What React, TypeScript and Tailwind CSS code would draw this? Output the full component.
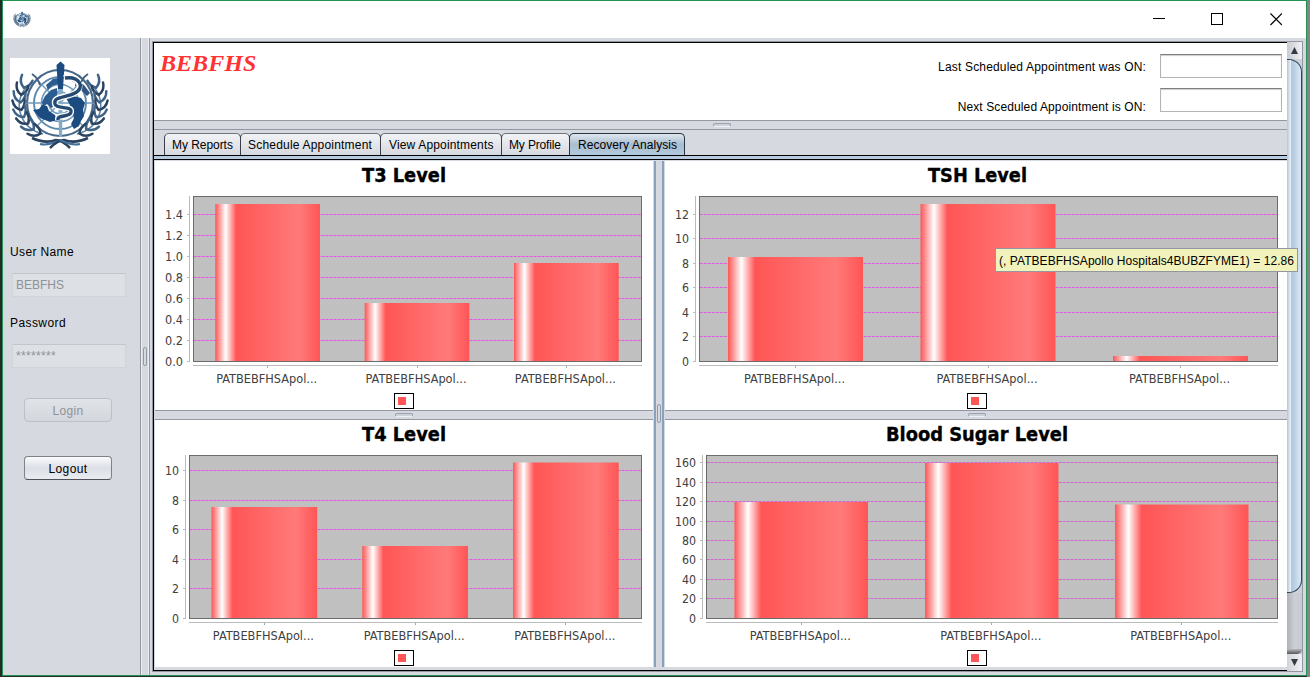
import React from "react";

type Bar = { x: number; w: number; y: number };
type Tick = { label: string; y: number };
type ChartSpec = {
  id: string;
  title: string;
  titleX: number;
  titleW: number;
  titleY: number;
  view: [number, number, number, number];
  plot: { x: number; y: number; r: number; b: number };
  bars: Bar[];
  ticks: Tick[];
  legendX: number;
};

function makeTicks(labels: string[], zero: number, step: number): Tick[] {
  return labels.map((label, i) => ({ label, y: Math.round(zero - i * step) }));
}

const T3: ChartSpec = {
  id: "t3",
  title: "T3 Level",
  titleX: 362,
  titleW: 84,
  titleY: 182,
  view: [155, 161, 498, 249],
  plot: { x: 193, y: 196, r: 642, b: 361 },
  bars: [
    { x: 215.3, w: 104.7, y: 204 },
    { x: 364.7, w: 104.7, y: 303 },
    { x: 514, w: 104.7, y: 263 },
  ],
  ticks: makeTicks(["0.0", "0.2", "0.4", "0.6", "0.8", "1.0", "1.2", "1.4"], 361, 21),
  legendX: 394,
};

const T4: ChartSpec = {
  id: "t4",
  title: "T4 Level",
  titleX: 362,
  titleW: 84,
  titleY: 441,
  view: [155, 420, 498, 247],
  plot: { x: 189, y: 455, r: 642, b: 618 },
  bars: [
    { x: 211.5, w: 105.7, y: 507 },
    { x: 362.3, w: 105.7, y: 546 },
    { x: 513, w: 105.7, y: 462.5 },
  ],
  ticks: makeTicks(["0", "2", "4", "6", "8", "10"], 617.8, 29.55),
  legendX: 394,
};

const TSH: ChartSpec = {
  id: "tsh",
  title: "TSH Level",
  titleX: 928,
  titleW: 99,
  titleY: 182,
  view: [665, 161, 622, 249],
  plot: { x: 699, y: 196, r: 1278, b: 361 },
  bars: [
    { x: 728, w: 135, y: 257 },
    { x: 920.5, w: 135, y: 204 },
    { x: 1113, w: 135, y: 356 },
  ],
  ticks: makeTicks(["0", "2", "4", "6", "8", "10", "12"], 360.8, 24.47),
  legendX: 967,
};

const SUGAR: ChartSpec = {
  id: "sugar",
  title: "Blood Sugar Level",
  titleX: 886,
  titleW: 182,
  titleY: 441,
  view: [665, 420, 622, 247],
  plot: { x: 706, y: 455, r: 1278, b: 618 },
  bars: [
    { x: 734.5, w: 133.5, y: 502 },
    { x: 925, w: 133.5, y: 463 },
    { x: 1115, w: 133.5, y: 504.5 },
  ],
  ticks: makeTicks(["0", "20", "40", "60", "80", "100", "120", "140", "160"], 617.8, 19.45),
  legendX: 967,
};

function Chart({ spec }: { spec: ChartSpec }) {
  const { plot, view } = spec;
  const legendY = plot.b + 32;
  return (
    <svg
      width={view[2]}
      height={view[3]}
      viewBox={view.join(" ")}
      className="block shrink-0 bg-white font-['DejaVu_Sans_Condensed','DejaVu_Sans',sans-serif]"
    >
      <defs>
        <linearGradient id={"bar-" + spec.id} x1="0" x2="1" y1="0" y2="0">
          <stop offset="0" stopColor="#ff5555" />
          <stop offset="0.1" stopColor="#ffffff" />
          <stop offset="0.2" stopColor="#ff5555" />
          <stop offset="0.8" stopColor="#ff7a7a" />
          <stop offset="1" stopColor="#ff5555" />
        </linearGradient>
      </defs>
      <text
        x={spec.titleX}
        y={spec.titleY}
        textLength={spec.titleW}
        lengthAdjust="spacingAndGlyphs"
        fontSize="19.5"
        fontWeight="700"
        fontStretch="condensed"
        stroke="#000"
        strokeWidth="0.35"
      >
        {spec.title}
      </text>
      <rect x={plot.x + 0.5} y={plot.y + 0.5} width={plot.r - plot.x - 1} height={plot.b - plot.y} fill="#c0c0c0" />
      {spec.ticks.slice(1).map((t) => (
        <g key={t.label}>
          <path d={`M${plot.x + 1} ${t.y + 0.5}H${plot.r - 1}`} stroke="#c3a6c3" />
          <path d={`M${plot.x + 1} ${t.y + 0.5}H${plot.r - 1}`} stroke="#e15ade" strokeDasharray="2.6 1.4" />
        </g>
      ))}
      {spec.bars.map((b) => (
        <rect key={b.x} x={b.x} y={b.y} width={b.w} height={plot.b - b.y} fill={`url(#bar-${spec.id})`} />
      ))}
      <rect
        x={plot.x + 0.5}
        y={plot.y + 0.5}
        width={plot.r - plot.x - 1}
        height={plot.b - plot.y}
        fill="none"
        stroke="#6c6c6c"
      />
      <path d={`M${plot.x - 3.5} ${plot.y}V${plot.b + 1}`} stroke="#bcbcbc" />
      <path d={`M${plot.x} ${plot.b + 4.5}H${plot.r}`} stroke="#bcbcbc" />
      {spec.ticks.map((t) => (
        <g key={t.label}>
          <path d={`M${plot.x - 6} ${t.y + 0.5}h2`} stroke="#bcbcbc" />
          <text
            x={plot.x - 10 - t.label.replace(".", "").length * 7 - (t.label.includes(".") ? 4 : 0)}
            y={t.y + 5}
            textLength={t.label.replace(".", "").length * 7 + (t.label.includes(".") ? 4 : 0)}
            lengthAdjust="spacingAndGlyphs"
            fontSize="12"
            fontStretch="condensed"
            fill="#404040"
          >
            {t.label}
          </text>
        </g>
      ))}
      {spec.bars.map((b) => {
        const cx = b.x + b.w / 2;
        return (
          <g key={b.x}>
            <path d={`M${Math.floor(cx) + 0.5} ${plot.b + 5}v2`} stroke="#a8a8a8" />
            <text
              x={cx - 51.5}
              y={plot.b + 22}
              textLength="101"
              lengthAdjust="spacingAndGlyphs"
              fontSize="12"
              fontStretch="condensed"
              fill="#404040"
            >
              PATBEBFHSApol...
            </text>
          </g>
        );
      })}
      <rect x={spec.legendX + 0.5} y={legendY + 0.5} width="19" height="15" fill="#fff" stroke="#000" />
      <rect x={spec.legendX + 4} y={legendY + 4} width="8" height="8" fill="#ff5555" />
    </svg>
  );
}

const LEAVES = [205, 193, 181, 169, 157, 145, 133, 121];

function Emblem({ size, height, detail }: { size: number; height: number; detail: boolean }) {
  const navy = "#1b4b80";
  const dark = "#2a435e";
  return (
    <svg width={size} height={height} viewBox="0 0 100 96" className="block" preserveAspectRatio="none">
      {detail && <rect width="100" height="96" fill="#fff" />}
      <g fill="none" stroke="#6f98ba" strokeWidth={detail ? 1.6 : 2.6}>
        <circle cx="50" cy="45" r="33" stroke="#46688a" strokeWidth={detail ? 2.2 : 3.5} />
        <circle cx="50" cy="45" r="26" stroke="#5d88ad" strokeWidth="1.9" />
        <circle cx="50" cy="45" r="18.5" />
        <circle cx="50" cy="45" r="11" />
        <path d="M16 45H84M27 22L73 68M73 22L27 68" strokeWidth="1.4" />
      </g>
      <g fill={navy}>
        <path d="M36 27l7-6 5-1v6l-6 2-4 4zM35 38l6-6 6-2 1 13-3 5-4 2-4-4-4 3-1-5z" fill="#2b5d90" />
        <path d="M66 22l8 5 6 8-3 3-6-6-6-4z" fill="#2f5680" />
        <path d="M23 52l6-1 3-4 5 1 2 5 6 4 2 5-7 2-5-2-5-2z" />
        <path d="M56 40l7-2 8 2 4 5-2 7 1 6-3 5-2 5-5 3-3-5 3-6-1-5-5-4 2-4z" />
      </g>
      {[false, true].map((right) => (
        <g key={String(right)} transform={right ? "translate(100 0) scale(-1 1)" : undefined} stroke={dark} fill="none">
          <path d="M17 28C2 46 10 70 33 76" stroke="#5f84a6" strokeWidth="1.6" />
          {LEAVES.map((deg, i) => {
            const a = (deg * Math.PI) / 180;
            const x = 50 + 39.5 * Math.cos(a);
            const y = 44 + 36 * Math.sin(a);
            return (
              <g key={deg} transform={`translate(${x.toFixed(1)} ${y.toFixed(1)}) rotate(${deg - 180})`}>
                <path
                  d="M0 1Q-7-2-7-10M0 1Q5-3 5-9"
                  stroke={i % 2 ? dark : "#3f6386"}
                  strokeWidth={detail ? 2.5 : 3.2}
                  strokeLinecap="round"
                />
              </g>
            );
          })}
          <path d="M22 16Q28 20 30 27" strokeWidth="2" stroke="#45617d" />
          <path d="M22 80Q35 86 46 82Q52 82 60 90" strokeWidth="2.6" />
          <path d="M30 86Q38 88 50 82" strokeWidth="2" stroke="#44709a" />
        </g>
      ))}
      <path d="M48 30h5l-1 49h-3z" fill="#86abc8" />
      <path d="M46.5 7L50.5 3.5 54.500 7 53 31h-5z" fill={navy} />
      <path
        d="M54 20C67 17 75 29 65 35C56 40 43 38 45 46C47 52 62 47 61 54C60 60 47 56 48 62"
        fill="none"
        stroke="#fff"
        strokeWidth={detail ? 6 : 3}
      />
      <path
        d="M55 20C69 18 76 29 65 35C56 40 43 38 45 46C47 52 62 47 61 54C60 60 47 56 48 62"
        fill="none"
        stroke="#264b72"
        strokeWidth={detail ? 3.4 : 5}
      />
    </svg>
  );
}

function HHandle() {
  return <div className="h-[4px] w-[18px] rounded-[2px] border border-[#9aa0ac] border-b-[#eef0f4] bg-[#cdd1d9]" />;
}

function VHandle() {
  return <div className="h-[19px] w-[4px] rounded-[2px] border border-[#9298a6] bg-[#d6d9df]" />;
}

function HSplit({ pad }: { pad: string }) {
  return (
    <div className={"flex h-[10px] shrink-0 items-start border-y border-[#9297a1] bg-[#d6d9df] pt-[2px] " + pad}>
      <HHandle />
    </div>
  );
}

function Tab({ label, cls, active = false }: { label: string; cls: string; active?: boolean }) {
  return (
    <div
      className={
        "-mr-px flex h-[22px] shrink-0 items-center whitespace-nowrap rounded-t-[5px] border border-b-0 pt-[1px] " +
        (active
          ? "border-[#273442] bg-gradient-to-b from-[#dfe7ee] via-[#a9bed1] to-[#b3c9dc] "
          : "border-[#3b3f47] border-t-[#70747c] bg-gradient-to-b from-[#f2f3f6] to-[#d6d9df] ") +
        cls
      }
    >
      {label}
    </div>
  );
}

function ScrollBar() {
  return (
    <div className="flex w-[16px] shrink-0 flex-col border-r border-[#9297a1] bg-[#cfd2d8]">
      <div className="flex h-[17px] items-center justify-center bg-gradient-to-r from-[#c8cbd1] to-[#f0f1f4]">
        <svg width="7" height="7" viewBox="0 0 7 7">
          <path d="M3.5 0L7 7H0z" fill="#333a42" />
        </svg>
      </div>
      <div className="h-[535px] rounded-r-[13px] border-y border-r border-[#2c4659] bg-gradient-to-r from-[#a9bdd0] via-[#b7cfe3] to-[#dceaf7]">
        <div className="h-full w-[4px] bg-gradient-to-r from-[#b8c3d4] to-[#eff5fa]" />
      </div>
      <div className="flex h-[61px] flex-col justify-end bg-gradient-to-r from-[#aeb1b8] via-[#cccfd4] to-[#c7cad0]">
        <div className="h-[5px] rounded-br-[10px] bg-gradient-to-b from-[#b8bac0] to-[#55575c]" />
      </div>
      <div className="flex h-[17px] items-center justify-center bg-gradient-to-r from-[#d1d4d9] to-[#f0f1f4]">
        <svg width="7" height="7" viewBox="0 0 7 7">
          <path d="M0 0H7L3.5 7z" fill="#333a42" />
        </svg>
      </div>
    </div>
  );
}

function TitleBar() {
  return (
    <div className="flex h-[37px] shrink-0 items-center justify-between bg-white pl-[10px] pr-[24px]">
      <Emblem size={18} height={17} detail={false} />
      <svg width="129" height="13" viewBox="0 0 129 13" fill="none" stroke="#000" className="block">
        <path d="M0 5.5H12" />
        <rect x="58.5" y=".5" width="11" height="11" />
        <path d="M117.500.5L129 12M129 .5L117.500 12" strokeWidth="1.2" />
      </svg>
    </div>
  );
}

function Sidebar() {
  return (
    <div className="flex w-[137px] shrink-0 flex-col pl-[7px] pt-[20px]">
      <Emblem size={100} height={96} detail />
      <div className="mt-[91px] h-[14px] leading-[14px] tracking-[0.36px]">User Name</div>
      <div className="ml-[2px] mt-[14px] flex h-[24px] w-[114px] items-center border border-[#d0d3d8] border-t-[#c3c6ca] bg-[#dde0e4] pl-[3px] text-[#8e9297]">
        BEBFHS
      </div>
      <div className="mt-[19px] h-[14px] leading-[14px] tracking-[0.42px]">Password</div>
      <div className="ml-[2px] mt-[14px] flex h-[24px] w-[114px] items-center border border-[#d0d3d8] border-t-[#c3c6ca] bg-[#dde0e4] pl-[3px] tracking-[0.33px] text-[#8e9297]">
        ********
      </div>
      <div className="ml-[14px] mt-[30px] flex h-[24px] w-[88px] items-center justify-center rounded-[4px] border border-[#bbbfc6] bg-gradient-to-b from-[#e0e3e7] to-[#d3d6dc] pt-px tracking-[0.3px] text-[#8e9297]">
        Login
      </div>
      <div className="ml-[14px] mt-[34px] flex h-[24px] w-[88px] items-center justify-center rounded-[4px] border border-[#7d8188] border-b-[#4e5258] bg-gradient-to-b from-[#fafbfc] via-[#dcdfe5] to-[#e9ecf1] pt-px tracking-[0.4px]">
        Logout
      </div>
    </div>
  );
}

function Header() {
  return (
    <div className="flex h-[77px] shrink-0 justify-between bg-white pl-[6px] pr-[5px]">
      <div className="pt-[6px] font-['Liberation_Serif',serif] text-[24px] font-bold italic leading-[28px] tracking-[0.05px] text-[#ff3333]">
        BEBFHS
      </div>
      <div className="flex gap-[14px] pt-[11px]">
        <div className="flex flex-col items-end gap-[26px] pt-[6px] leading-[14px]">
          <div className="tracking-[0.17px]">Last Scheduled Appointment was ON:</div>
          <div className="tracking-[0.11px]">Next Sceduled Appointment is ON:</div>
        </div>
        <div className="flex flex-col gap-[10px]">
          <div className="h-[24px] w-[122px] border border-[#b4b4b4] border-t-[#7f7f7f] bg-white shadow-[inset_0_1px_1px_#cccccc]" />
          <div className="h-[24px] w-[122px] border border-[#b4b4b4] border-t-[#7f7f7f] bg-white shadow-[inset_0_1px_1px_#cccccc]" />
        </div>
      </div>
    </div>
  );
}

export default function App() {
  return (
    <div className="relative flex h-[677px] w-[1310px] overflow-hidden bg-[#262a2a] pl-[2px] font-['Liberation_Sans',Arial,sans-serif] text-[12px] text-black">
      <div className="flex h-[676px] w-[1305px] shrink-0 flex-col border border-[#239252] bg-[#d6d9df]">
        <TitleBar />
        <div className="flex h-[637px]">
          <Sidebar />
          <div className="flex w-[10px] shrink-0 items-center justify-center border-x border-[#9297a1] bg-[#d6d9df] shadow-[inset_1px_0_0_#eceef2,inset_-1px_0_0_#eceef2]">
            <VHandle />
          </div>
          <div className="ml-[2px] mt-[3px] flex h-[631px] w-[1151px] border border-[#9297a1]">
            <div className="flex w-[1134px] shrink-0 flex-col border-y border-l border-black">
              <Header />
              <HSplit pad="pl-[559px]" />
              <div className="flex h-[25px] shrink-0 items-end bg-[#d6d9df] pl-[10px]">
                <Tab label="My Reports" cls="w-[77px] pl-[7px] tracking-[-0.05px]" />
                <Tab label="Schedule Appointment" cls="w-[141px] pl-[7px] tracking-[0.2px]" />
                <Tab label="View Appointments" cls="w-[122px] pl-[8px] tracking-[0.16px]" />
                <Tab label="My Profile" cls="w-[69px] pl-[7px] tracking-[-0.15px]" />
                <Tab label="Recovery Analysis" cls="w-[116px] pl-[8px] tracking-[0.06px]" active />
              </div>
              <div className="h-[5px] shrink-0 border-y border-black bg-[#b5cbe1]" />
              <div className="flex h-[510px] shrink-0 border-b-[3px] border-l border-t border-[#d6d9df]">
                <div className="w-[498px] shrink-0">
                  <Chart spec={T3} />
                  <HSplit pad="pl-[240px]" />
                  <Chart spec={T4} />
                </div>
                <div className="flex w-[12px] shrink-0 justify-center border-x border-[#d6d9df] bg-[#d6d9df]">
                  <div className="flex w-[10px] justify-center border-x-2 border-[#87a1be] pt-[243px]">
                    <VHandle />
                  </div>
                </div>
                <div className="w-[622px] shrink-0">
                  <Chart spec={TSH} />
                  <HSplit pad="pl-[303px]" />
                  <Chart spec={SUGAR} />
                </div>
              </div>
            </div>
            <ScrollBar />
          </div>
        </div>
      </div>
      <div className="w-[3px] shrink-0 bg-[#858585]" />
      <div className="absolute left-[995px] top-[248px] flex h-[24px] w-[303px] items-center whitespace-nowrap border border-[#9297a1] bg-[#f2f2bd] pl-[3px] pt-px tracking-[0.05px]">
        (, PATBEBFHSApollo Hospitals4BUBZFYME1) = 12.86
      </div>
    </div>
  );
}
